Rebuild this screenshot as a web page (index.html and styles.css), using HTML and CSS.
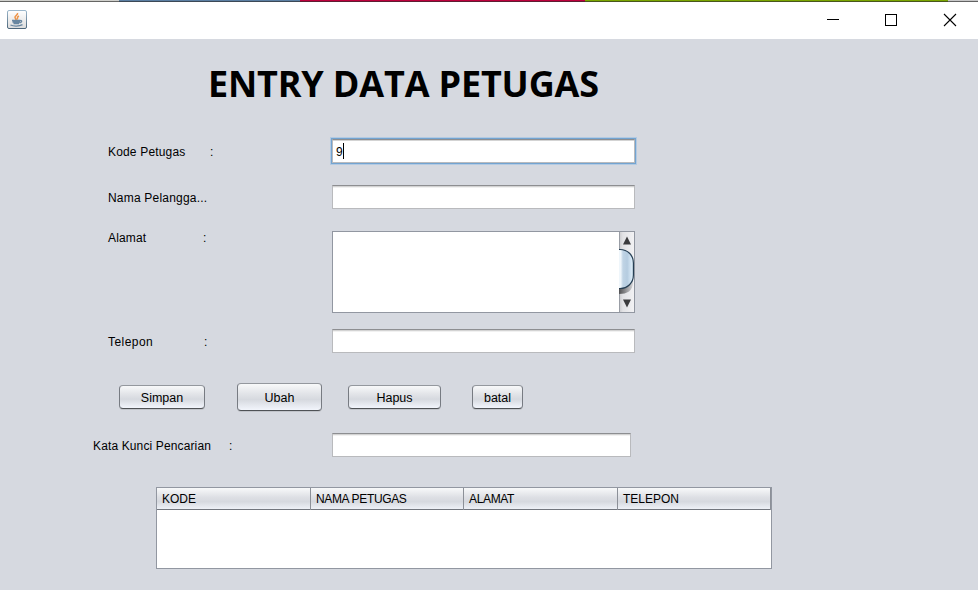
FILE: index.html
```html
<!DOCTYPE html>
<html lang="id">
<head>
<meta charset="utf-8">
<title>Entry Data Petugas</title>
<link rel="stylesheet" href="styles.css">
</head>
<body>
<div class="strip"></div>
<header class="titlebar">
  <svg class="java" width="20" height="20" viewBox="0 0 20 20" fill="none">
    <defs>
      <linearGradient id="tile" x1="0" y1="0" x2="0" y2="1"><stop offset="0" stop-color="#fff"/><stop offset="1" stop-color="#dcdcdc"/></linearGradient>
      <linearGradient id="edge" x1="0" y1="0" x2="0" y2="1"><stop offset="0" stop-color="#9db8cc"/><stop offset="1" stop-color="#4c667b"/></linearGradient>
    </defs>
    <rect x=".5" y=".5" width="19" height="18" rx="1.500" fill="url(#tile)" stroke="url(#edge)"/>
    <path d="M10.500 3c1 2-3 2.500-2.500 4.500 .2 1 1.200 1.200 1 2.500M12 6c-2.500 1-1.500 2-1.500 3.500" stroke="#ee9448" stroke-width="1.500"/>
    <path d="M5 10.500h8.500M5.500 12h7.500M6.500 13.500h5.500M13.300 10.300c2.300 0 1.500 2.200-1 2.500M3.500 15c3 1.500 8.500 1.500 12-.3" stroke="#6886a0" stroke-width="1.300"/>
  </svg>
  <svg class="controls" width="132" height="14" viewBox="0 0 132 14" fill="none" stroke="#000" shape-rendering="crispEdges">
    <path d="M0 6.500h12"/>
    <rect x="58.500" y="1.500" width="11" height="11"/>
    <path d="M117 1l12 12M129 1l-12 12" shape-rendering="auto" stroke-width="1.100"/>
  </svg>
</header>
<main class="form">
  <h1>ENTRY DATA PETUGAS</h1>
  <div class="row kode"><label>Kode Petugas</label><span class="colon">:</span><div class="field focused">9<i class="caret"></i></div></div>
  <div class="row nama"><label>Nama Pelangga...</label><span class="colon"></span><div class="field"></div></div>
  <div class="row alamat"><label>Alamat</label><span class="colon">:</span>
    <div class="area">
      <svg width="15" height="80" viewBox="0 0 15 80">
        <defs>
          <linearGradient id="track"><stop offset="0" stop-color="#c8c8cb"/><stop offset=".25" stop-color="#e2e2e5"/><stop offset="1" stop-color="#f2f2f4"/></linearGradient>
          <linearGradient id="thumb"><stop offset="0" stop-color="#eff6fb"/><stop offset=".18" stop-color="#eff6fb"/><stop offset=".32" stop-color="#c0d4e5"/><stop offset=".6" stop-color="#b5cce0"/><stop offset="1" stop-color="#e6f5ff"/></linearGradient>
          <linearGradient id="shade"><stop offset="0" stop-color="#505052"/><stop offset="1" stop-color="#d5d5d8"/></linearGradient>
        </defs>
        <rect width="15" height="80" fill="url(#track)"/>
        <path d="M0 62c8 0 14-3 14-12v-3H0z" fill="url(#shade)"/>
        <path d="M-1 17.500h2C8.500 17.500 14.400 23 14.400 31v12c0 8-5.900 13.500-13.400 13.500h-2z" fill="url(#thumb)" stroke="#263f54" stroke-width="1.200"/>
        <path d="M4 12.500 8 4.500l4 8zM4 67.500l4 8 4-8z" fill="#3b3b3d"/>
        <path d="M.5 0v17M.5 62v18" stroke="#999da5"/>
      </svg>
    </div>
  </div>
  <div class="row telepon"><label>Telepon</label><span class="colon">:</span><div class="field"></div></div>
  <div class="buttons">
    <button class="simpan">Simpan</button><button class="ubah">Ubah</button><button class="hapus">Hapus</button><button class="batal">batal</button>
  </div>
  <div class="row cari"><label>Kata Kunci Pencarian</label><span class="colon">:</span><div class="field"></div></div>
  <div class="table">
    <div class="thead"><span>KODE</span><span class="wide">NAMA PETUGAS</span><span class="wide">ALAMAT</span><span>TELEPON</span></div>
  </div>
</main>
</body>
</html>
```
FILE: styles.css
```css
* { box-sizing: border-box; }
body { margin: 0; width: 978px; height: 590px; overflow: hidden; background: #d6d9e0; color: #000; font: 12px/16px "Liberation Sans", Arial, sans-serif; }
.strip { height: 2px; border-bottom: 1px solid rgba(45, 45, 45, .65); background: linear-gradient(90deg, #d0d0cc 119px, #5b7fa3 119px 300px, #be003c 300px 585px, #7ba600 585px 948px, #c8c8c8 948px); }
.titlebar { display: flex; justify-content: space-between; height: 37px; padding: 8px 19px 0 7px; background: #fff; }
.controls { margin-top: 3px; }
h1 { height: 50px; margin: 20px 0 0 208px; font: bold 36px/50px "Open Sans", "Noto Sans", sans-serif; letter-spacing: -.17px; white-space: nowrap; }
.row { display: flex; align-items: flex-start; padding-left: 108px; }
.row label { width: 102px; padding-top: 5px; white-space: nowrap; letter-spacing: .17px; }
.colon { width: 122px; padding-top: 5px; }
.field { width: 303px; height: 24px; padding: 4px 4px; background: #fff; border: 1px solid #b9babd; border-top-color: #8d8e91; box-shadow: inset 0 1px #d3d3d3, inset 0 2px #f1f1f1; }
.focused { display: flex; box-shadow: inset 0 1px #d3d3d3, 0 0 0 1px #73a4d1, 0 0 0 2px #b3cae2; padding-left: 3px; }
.caret { width: 1px; height: 16px; margin-top: -1px; background: #000; }
.kode { margin-top: 30px; }
.nama { margin-top: 22px; }
.nama label { letter-spacing: .2px; }
.alamat { margin-top: 22px; }
.alamat label { width: 95px; padding-top: 0; margin-top: -1px; }
.alamat .colon { width: 129px; padding-top: 0; margin-top: -1px; }
.area { display: flex; justify-content: flex-end; width: 303px; height: 82px; background: #fff; border: 1px solid #9297a1; }
.telepon { margin-top: 16px; }
.telepon label { width: 96px; letter-spacing: .45px; }
.telepon .colon { width: 128px; }
.buttons { display: flex; align-items: center; height: 28px; margin: 30px 0 0 119px; }
button { height: 24px; padding: 2px 0 0; border: 1px solid #777b82; border-top-color: #94989e; border-bottom-color: #4f5256; border-radius: 4px; background: linear-gradient(#f8f9fa, #e3e5e9 35%, #d6d9df 60%, #f2f5fc); box-shadow: 0 1px #c1c4ca; color: #000; font: 12.5px/16px "Liberation Sans", Arial, sans-serif; }
.simpan { width: 86px; margin-right: 32px; }
.ubah { width: 85px; height: 28px; margin-right: 26px; }
.hapus { width: 93px; margin-right: 31px; }
.batal { width: 51px; }
.cari { margin-top: 22px; padding-left: 93px; }
.cari label { width: 136px; letter-spacing: .13px; }
.cari .colon { width: 103px; }
.cari .field { width: 299px; }
.table { width: 616px; height: 82px; margin: 30px 0 0 156px; background: #fff; border: 1px solid #9297a1; }
.thead { display: grid; grid-template-columns: 154px 153px 154px 153px; height: 22px; border-bottom: 1px solid #72767e; background: linear-gradient(#f8f9fa, #dddfe4 45%, #d6d9df 65%, #eef1f7); }
.thead span { padding: 3px 5px; border-right: 1px solid #8c9098; }
.thead .wide { letter-spacing: -.35px; }
```
